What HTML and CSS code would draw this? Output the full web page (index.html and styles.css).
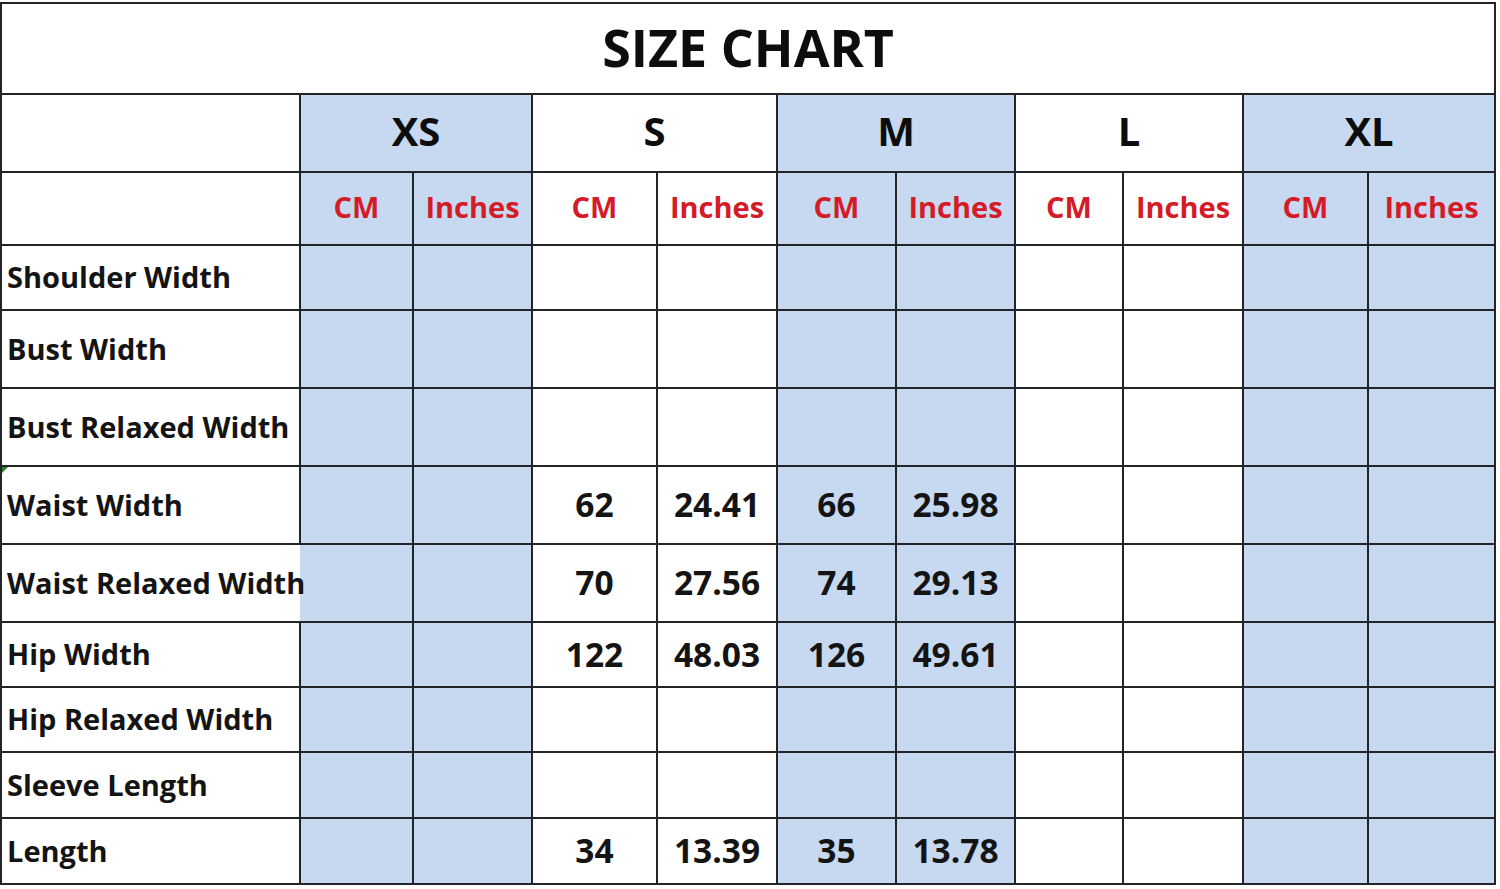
FILE: index.html
```html
<!DOCTYPE html>
<html>
<head>
<meta charset="utf-8">
<link rel="stylesheet" href="styles.css">
</head>
<body>
<table class="chart">
  <colgroup>
    <col class="c-label">
    <col class="c-xs-cm"><col class="c-xs-in">
    <col class="c-s-cm"><col class="c-s-in">
    <col class="c-m-cm"><col class="c-m-in">
    <col class="c-l-cm"><col class="c-l-in">
    <col class="c-xl-cm"><col class="c-xl-in">
  </colgroup>
  <tr class="r-title"><td colspan="11" class="title">SIZE CHART</td></tr>
  <tr class="r-size">
    <td></td>
    <td colspan="2" class="size blue">XS</td>
    <td colspan="2" class="size">S</td>
    <td colspan="2" class="size blue">M</td>
    <td colspan="2" class="size">L</td>
    <td colspan="2" class="size blue">XL</td>
  </tr>
  <tr class="r-unit">
    <td></td>
    <td class="unit blue">CM</td><td class="unit blue">Inches</td>
    <td class="unit">CM</td><td class="unit">Inches</td>
    <td class="unit blue">CM</td><td class="unit blue">Inches</td>
    <td class="unit">CM</td><td class="unit">Inches</td>
    <td class="unit blue">CM</td><td class="unit blue">Inches</td>
  </tr>
  <tr class="r-short">
    <td class="label">Shoulder Width</td>
    <td class="blue"></td><td class="blue"></td><td></td><td></td>
    <td class="blue"></td><td class="blue"></td><td></td><td></td>
    <td class="blue"></td><td class="blue"></td>
  </tr>
  <tr class="r-tall">
    <td class="label">Bust Width</td>
    <td class="blue"></td><td class="blue"></td><td></td><td></td>
    <td class="blue"></td><td class="blue"></td><td></td><td></td>
    <td class="blue"></td><td class="blue"></td>
  </tr>
  <tr class="r-tall">
    <td class="label">Bust Relaxed Width</td>
    <td class="blue"></td><td class="blue"></td><td></td><td></td>
    <td class="blue"></td><td class="blue"></td><td></td><td></td>
    <td class="blue"></td><td class="blue"></td>
  </tr>
  <tr class="r-tall">
    <td class="label flagged">Waist Width</td>
    <td class="blue"></td><td class="blue"></td>
    <td class="num">62</td><td class="num">24.41</td>
    <td class="num blue">66</td><td class="num blue">25.98</td>
    <td></td><td></td>
    <td class="blue"></td><td class="blue"></td>
  </tr>
  <tr class="r-tall">
    <td class="label overflow">Waist Relaxed Width</td>
    <td class="blue"></td><td class="blue"></td>
    <td class="num">70</td><td class="num">27.56</td>
    <td class="num blue">74</td><td class="num blue">29.13</td>
    <td></td><td></td>
    <td class="blue"></td><td class="blue"></td>
  </tr>
  <tr class="r-short">
    <td class="label">Hip Width</td>
    <td class="blue"></td><td class="blue"></td>
    <td class="num">122</td><td class="num">48.03</td>
    <td class="num blue">126</td><td class="num blue">49.61</td>
    <td></td><td></td>
    <td class="blue"></td><td class="blue"></td>
  </tr>
  <tr class="r-short">
    <td class="label">Hip Relaxed Width</td>
    <td class="blue"></td><td class="blue"></td><td></td><td></td>
    <td class="blue"></td><td class="blue"></td><td></td><td></td>
    <td class="blue"></td><td class="blue"></td>
  </tr>
  <tr class="r-short2">
    <td class="label">Sleeve Length</td>
    <td class="blue"></td><td class="blue"></td><td></td><td></td>
    <td class="blue"></td><td class="blue"></td><td></td><td></td>
    <td class="blue"></td><td class="blue"></td>
  </tr>
  <tr class="r-short2">
    <td class="label">Length</td>
    <td class="blue"></td><td class="blue"></td>
    <td class="num">34</td><td class="num">13.39</td>
    <td class="num blue">35</td><td class="num blue">13.78</td>
    <td></td><td></td>
    <td class="blue"></td><td class="blue"></td>
  </tr>
</table>
</body>
</html>
```

FILE: styles.css
```css
html, body {
  margin: 0;
  padding: 0;
  background: #ffffff;
}

body {
  padding-top: 2px;
  font-family: "Open Sans", "Noto Sans", sans-serif;
  color: #111111;
}

.chart {
  border-collapse: collapse;
  table-layout: fixed;
  width: 1496px;
}

.chart td {
  border: 2px solid #222428;
  padding: 0;
  vertical-align: middle;
  text-align: center;
  white-space: nowrap;
  font-weight: 700;
}

.c-label { width: 299px; }
.c-xs-cm { width: 113px; }
.c-xs-in { width: 119px; }
.c-s-cm { width: 125px; }
.c-s-in { width: 120px; }
.c-m-cm { width: 119px; }
.c-m-in { width: 119px; }
.c-l-cm { width: 108px; }
.c-l-in { width: 120px; }
.c-xl-cm { width: 125px; }
.c-xl-in { width: 127px; }

.r-title { height: 91px; }
.r-size { height: 78px; }
.r-unit { height: 73px; }
.r-short { height: 65px; }
.r-short2 { height: 66px; }
.r-tall { height: 78px; }

.chart td.blue {
  background: #c6d9f0;
}

.chart td.title {
  font-size: 52px;
  color: #0d0d0d;
  padding-bottom: 4px;
}

.chart td.size {
  font-size: 40px;
  color: #0d0d0d;
  padding-bottom: 5px;
}

.chart td.unit {
  font-size: 29px;
  color: #d41c28;
  padding-bottom: 4px;
}

.chart td.label {
  text-align: left;
  padding-left: 5px;
  padding-bottom: 2px;
  font-size: 29px;
  color: #141414;
  overflow: visible;
}

.chart td.label.overflow {
  border-right-style: hidden;
}

.chart td.label.flagged {
  position: relative;
}

.chart td.label.flagged::before {
  content: "";
  position: absolute;
  left: 0;
  top: 0;
  border-top: 6px solid #2e7d32;
  border-right: 6px solid transparent;
}

.chart td.num {
  font-size: 33.5px;
  color: #141414;
  padding-bottom: 2px;
}
```
